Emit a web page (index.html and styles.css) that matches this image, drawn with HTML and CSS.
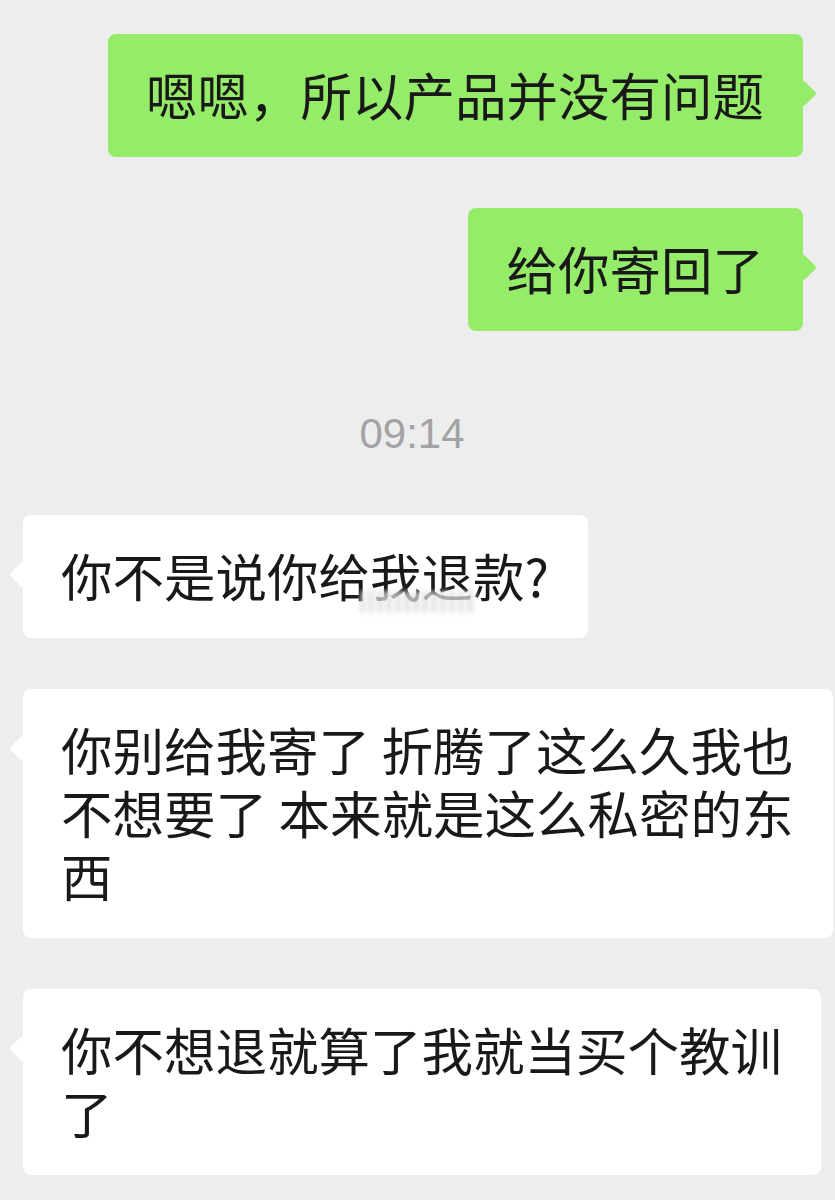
FILE: index.html
```html
<!DOCTYPE html>
<html lang="zh-CN">
<head>
    <meta charset="UTF-8">
    <meta name="viewport" content="width=device-width, initial-scale=1.0">
    <title>聊天记录</title>
    <link rel="stylesheet" href="styles.css">
</head>
<body>
    <div class="chat">
        <div class="row row-me">
            <div class="bubble bubble-me">嗯嗯，所以产品并没有问题</div>
        </div>
        <div class="row row-me">
            <div class="bubble bubble-me">给你寄回了</div>
        </div>

        <div class="time">09:14</div>

        <div class="row row-other">
            <div class="bubble bubble-other">你不是说你给我退款?<span class="smudge"></span></div>
        </div>
        <div class="row row-other">
            <div class="bubble bubble-other">你别给我寄了 折腾了这么久我也<br>不想要了 本来就是这么私密的东<br>西</div>
        </div>
        <div class="row row-other">
            <div class="bubble bubble-other">你不想退就算了我就当买个教训<br>了</div>
        </div>
    </div>
</body>
</html>
```

FILE: styles.css
```css
body {margin: 0; background-color: #ededed; font-family: "Noto Sans CJK SC", "Noto Sans", sans-serif; color: #191919;}
.chat {padding-top: 34px; display: flex; flex-direction: column;}
.row {display: flex; margin-bottom: 51px;}
.row-me {justify-content: flex-end; padding-right: 32px;}
.row-other {justify-content: flex-start; padding-left: 23px;}
.bubble {position: relative; box-sizing: border-box; max-width: 812px; padding: 28px 39px 32px 38px; font-size: 51.5px; line-height: 63px; border-radius: 8px;}
.bubble::after {content: ""; position: absolute; top: 50px; width: 19px; height: 19px; border-radius: 3px; transform: rotate(45deg);}
.bubble-me {background-color: #95ec69;}
.bubble-me::after {right: -10px; background-color: #95ec69;}
.bubble-other {background-color: #fff;}
.bubble-other::after {left: -10px; background-color: #fff;}
.time {margin: 27px 0 56px; padding-right: 11px; text-align: center; font-family: "Liberation Sans", Arial, sans-serif; font-size: 42px; line-height: 50px; color: #a3a3a3;}
.smudge {position: absolute; left: 337px; top: 76px; width: 116px; height: 22px; background: repeating-linear-gradient(90deg, #d8d8d8 0 4px, #f4f4f4 4px 9px); opacity: 0.7; filter: blur(2px);}
```
